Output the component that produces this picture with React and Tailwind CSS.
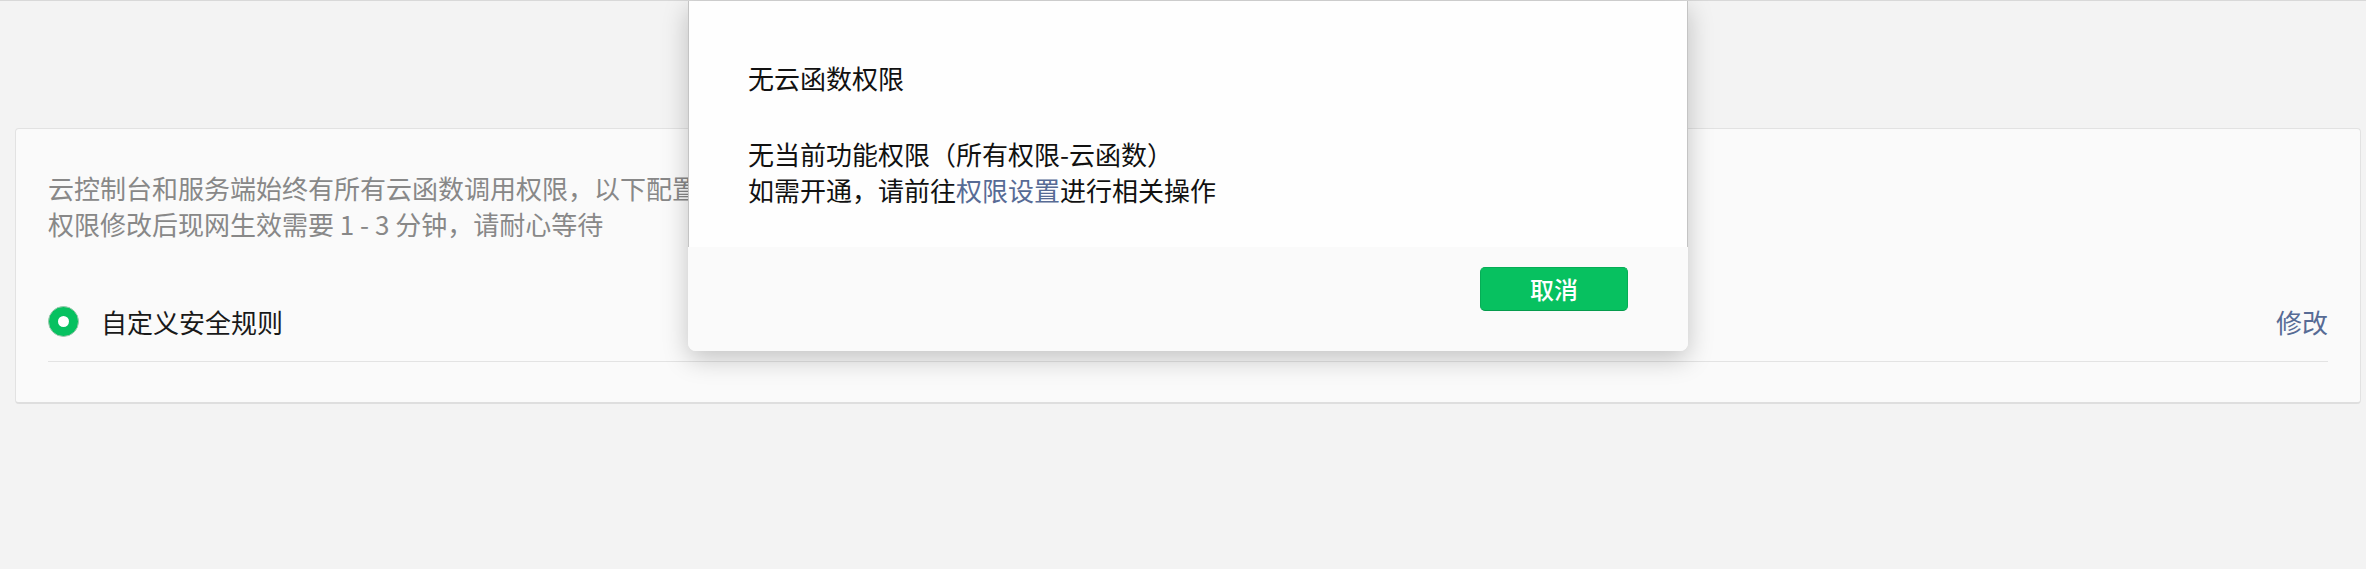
import React from 'react';

const font = { fontFamily: '"Noto Sans CJK SC", "Noto Sans", sans-serif' };

const RuleRow = ({ label, onEdit }) => {
  return (
    <div className="mt-[40px] h-[80px] flex items-center justify-between border-b border-[#e3e3e3]">
      <div className="flex items-center">
        <span className="w-[31px] h-[31px] rounded-full bg-[#07c160] border border-[#9cc7ad] flex items-center justify-center">
          <span className="w-[11px] h-[11px] rounded-full bg-white"></span>
        </span>
        <span className="ml-[22px] text-[26px] leading-[36px] text-[#191919]">{label}</span>
      </div>
      <button onClick={onEdit} className="text-[26px] leading-[36px] text-[#576b95]">
        修改
      </button>
    </div>
  );
};

const NoPermissionModal = ({ onClose }) => {
  return (
    <div className="absolute left-[688px] top-[1px] w-[1000px] rounded-b-[8px] shadow-[0_8px_26px_rgba(0,0,0,0.22)]">
      <div className="bg-[#fefefe] border-x border-[#c4c4c4] pt-[59px] pb-[39px] px-[59px] text-[26px] leading-[36px] text-[#111]">
        <div>无云函数权限</div>
        <div className="mt-[40px]">
          <div>无当前功能权限（所有权限-云函数）</div>
          <div>
            如需开通，请前往<span className="text-[#576b95]">权限设置</span>进行相关操作
          </div>
        </div>
      </div>
      <div className="bg-[#fafafa] rounded-b-[8px] h-[104px] flex justify-end items-start pt-[20px] pr-[60px]">
        <button
          onClick={onClose}
          className="w-[148px] h-[44px] rounded-[5px] bg-[#07c160] border border-[#06ad56] border-b-[#059b4d] text-white text-[24px] leading-[32px] font-medium"
        >
          取消
        </button>
      </div>
    </div>
  );
};

export default function App() {
  return (
    <div className="relative w-[2366px] h-[569px] bg-[#f3f3f3] overflow-hidden" style={font}>
      <div className="h-px bg-[#d8d8d8]"></div>
      <div className="pt-[127px] pl-[15px] pr-[5px]">
        <div className="bg-[#fafafa] border border-[#e2e2e2] border-b-2 border-b-[#dedede] rounded-[4px] pt-[41px] pb-[40px] px-[32px]">
          <div className="text-[26px] leading-[36px] text-[#888]">
            {/* the rest of the first line sits under the modal */}
            <div>云控制台和服务端始终有所有云函数调用权限，以下配置</div>
            <div>权限修改后现网生效需要 1 - 3 分钟，请耐心等待</div>
          </div>
          <RuleRow label="自定义安全规则" onEdit={() => {}} />
        </div>
      </div>
      <NoPermissionModal onClose={() => {}} />
    </div>
  );
}
